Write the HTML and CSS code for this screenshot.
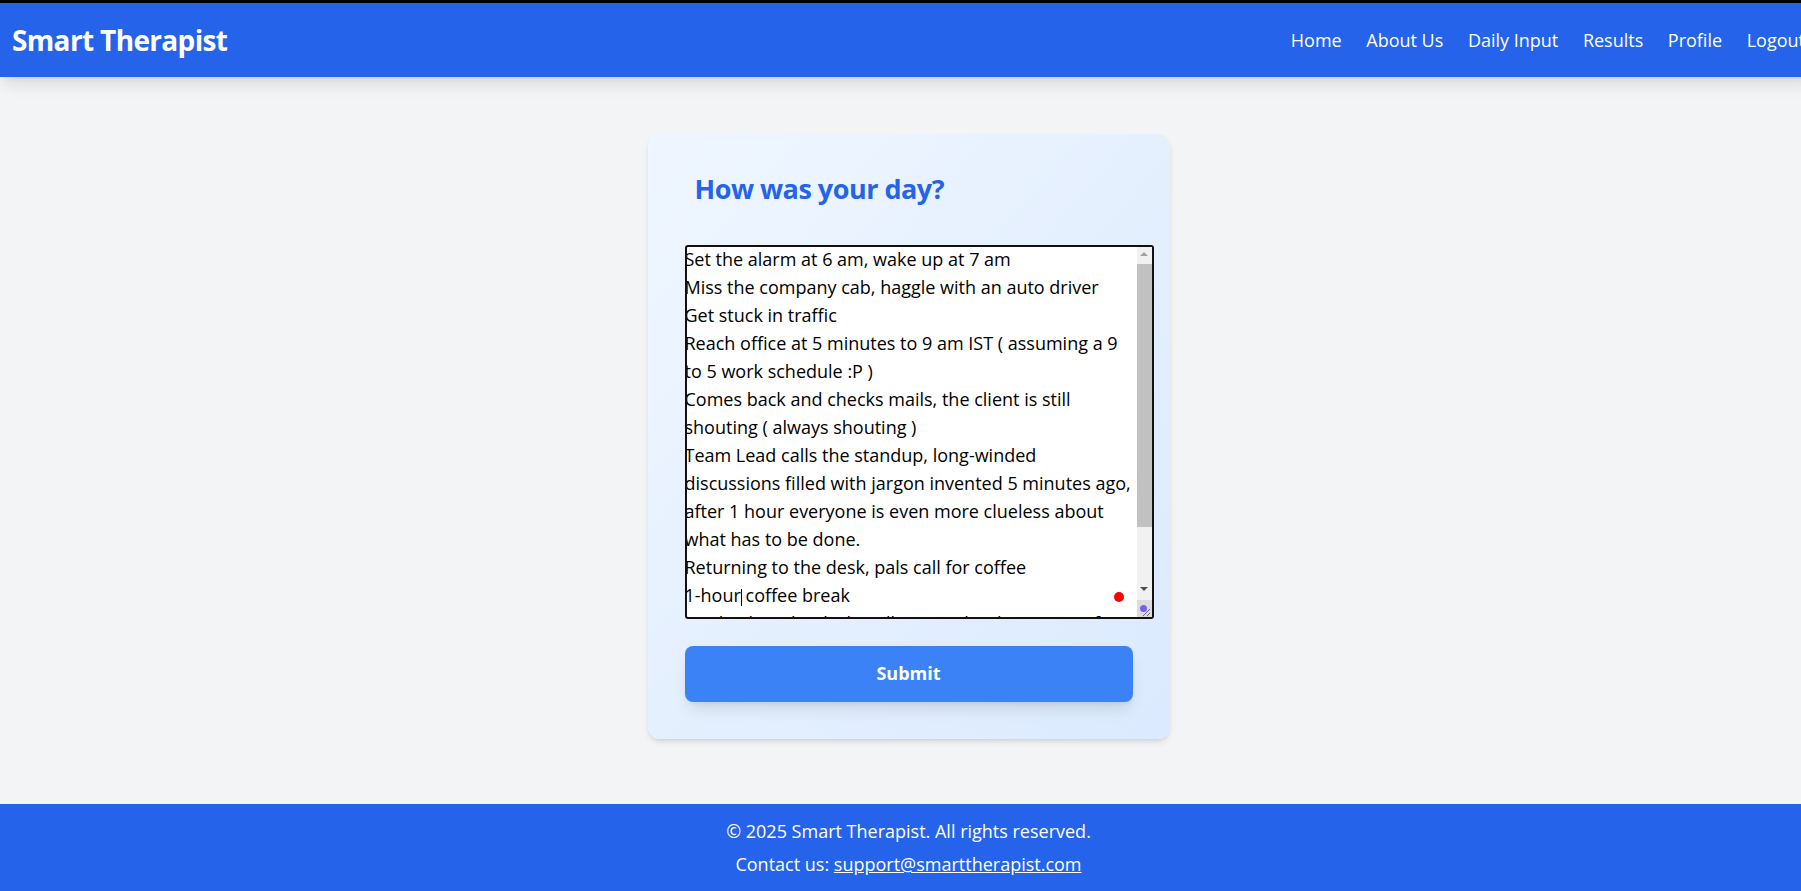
FILE: index.html
```html
<!DOCTYPE html>
<html lang="en">
<head>
<meta charset="utf-8">
<title>Smart Therapist - Daily Input</title>
<link rel="stylesheet" href="styles.css">
</head>
<body>
<div class="page">
  <header class="topbar">
    <a class="brand" href="#">Smart Therapist</a>
    <nav class="nav">
      <a href="#">Home</a>
      <a href="#">About Us</a>
      <a href="#">Daily Input</a>
      <a href="#">Results</a>
      <a href="#">Profile</a>
      <a href="#">Logout</a>
    </nav>
  </header>

  <main class="main">
    <section class="card">
      <h2 class="card-title">How was your day?</h2>
      <form class="entry-form" onsubmit="return false;">
        <div class="field">
          <textarea class="entry" name="entry" wrap="off">Set the alarm at 6 am, wake up at 7 am
Miss the company cab, haggle with an auto driver
Get stuck in traffic
Reach office at 5 minutes to 9 am IST ( assuming a 9
to 5 work schedule :P )
Comes back and checks mails, the client is still
shouting ( always shouting )
Team Lead calls the standup, long-winded
discussions filled with jargon invented 5 minutes ago,
after 1 hour everyone is even more clueless about
what has to be done.
Returning to the desk, pals call for coffee
1-hour coffee break
Get back to the desk, Still on Facebook, Twitter ( if
allowed )
Lunch break</textarea>
          <div class="scrollbar" aria-hidden="true">
            <span class="sb-btn sb-up"></span>
            <span class="sb-thumb"></span>
            <span class="sb-btn sb-down"></span>
          </div>
          <span class="resizer" aria-hidden="true">
            <svg width="15" height="17" viewBox="0 0 15 17">
              <path d="M13 9 L6 16 M13 13 L10 16" stroke="#6b6b6b" stroke-width="1" fill="none"/>
            </svg>
          </span>
          <span class="caret"></span>
          <span class="dot dot-red"></span>
          <span class="dot dot-purple"></span>
        </div>
        <button class="submit" type="submit">Submit</button>
      </form>
    </section>
  </main>

  <footer class="footer">
    <p>© 2025 Smart Therapist. All rights reserved.</p>
    <p>Contact us: <a href="#">support@smarttherapist.com</a></p>
  </footer>
</div>
</body>
</html>
```
FILE: styles.css
```css
html {
  overflow-x: hidden;
}

body {
  margin: 0;
  font-family: "Open Sans", "Noto Sans", sans-serif;
  background: #f3f4f6;
}

.page {
  min-width: 1817px;
  min-height: 891px;
  display: flex;
  flex-direction: column;
}

/* ---------- header ---------- */
.topbar {
  position: relative;
  z-index: 1;
  box-sizing: border-box;
  height: 77px;
  border-top: 3px solid #000;
  background: #2563eb;
  display: flex;
  align-items: center;
  justify-content: space-between;
  padding: 0 12px;
  box-shadow: 0 10px 15px -3px rgba(0, 0, 0, 0.1), 0 4px 6px -4px rgba(0, 0, 0, 0.1);
}

.brand {
  color: #fff;
  text-decoration: none;
  font-size: 28px;
  line-height: 36px;
  font-weight: 700;
  letter-spacing: -0.65px;
}

.nav {
  display: flex;
  gap: 24.6px;
}

.nav a {
  color: #fff;
  text-decoration: none;
  font-size: 18px;
  line-height: 28px;
}

/* ---------- main ---------- */
.main {
  flex: 1;
  display: flex;
  justify-content: center;
  align-items: flex-start;
  padding-top: 57px;
}

.card {
  box-sizing: border-box;
  width: 522px;
  padding: 37px;
  border-radius: 12px;
  background: linear-gradient(to bottom right, #eff6ff, #dbeafe);
  box-shadow: 0 4px 6px -1px rgba(0, 0, 0, 0.1), 0 2px 4px -2px rgba(0, 0, 0, 0.1);
}

.card-title {
  margin: 0 0 38px;
  padding-left: 10px;
  font-size: 27px;
  line-height: 36px;
  font-weight: 700;
  letter-spacing: -0.5px;
  color: #2563eb;
}

.entry-form {
  margin: 0;
}

.field {
  position: relative;
  width: 469px;
  height: 374px;
}

.entry {
  display: block;
  box-sizing: border-box;
  width: 469px;
  height: 374px;
  margin: 0;
  padding: 0 19px 0 0;
  border: 0;
  border-radius: 3px;
  outline: 2px solid #111;
  outline-offset: -2px;
  background: #fff;
  color: #000;
  font-family: "Open Sans", "Noto Sans", sans-serif;
  font-size: 18px;
  line-height: 28px;
  overflow: hidden;
  resize: none;
  white-space: pre;
}

/* drawn scrollbar and resize corner of the focused textarea */
.scrollbar {
  position: absolute;
  top: 2px;
  right: 2px;
  width: 15px;
  height: 353px;
  background: #f1f1f1;
}

.sb-btn {
  position: absolute;
  left: 0;
  width: 15px;
  height: 15px;
}

.sb-btn::before {
  content: "";
  position: absolute;
  left: 3.5px;
  width: 0;
  height: 0;
  border-left: 4px solid transparent;
  border-right: 4px solid transparent;
}

.sb-up {
  top: 0;
}

.sb-up::before {
  top: 5px;
  border-bottom: 4px solid #a3a3a3;
}

.sb-down {
  bottom: 0;
}

.sb-down::before {
  top: 2px;
  border-top: 4px solid #505050;
}

.sb-thumb {
  position: absolute;
  left: 0;
  top: 17px;
  width: 15px;
  height: 263px;
  background: #c1c1c1;
}

.resizer {
  position: absolute;
  right: 2px;
  bottom: 2px;
  width: 15px;
  height: 17px;
  background: #dcdcdc;
}

.resizer svg {
  display: block;
}

.caret {
  position: absolute;
  left: 56px;
  top: 344px;
  width: 1px;
  height: 17px;
  background: #000;
}

.dot {
  position: absolute;
  border-radius: 50%;
}

.dot-red {
  left: 429px;
  top: 347px;
  width: 10px;
  height: 10px;
  background: #f00;
}

.dot-purple {
  left: 455px;
  top: 360px;
  width: 7px;
  height: 7px;
  background: #7b5cf5;
}

.submit {
  display: block;
  width: 448px;
  height: 56px;
  margin: 27px auto 0;
  padding: 0 0 2px;
  border: 0;
  border-radius: 8px;
  background: #3b82f6;
  color: #fff;
  font-family: "Open Sans", "Noto Sans", sans-serif;
  font-size: 18px;
  font-weight: 700;
  box-shadow: 0 10px 15px -3px rgba(0, 0, 0, 0.1), 0 4px 6px -4px rgba(0, 0, 0, 0.1);
  cursor: pointer;
}

/* ---------- footer ---------- */
.footer {
  background: #2563eb;
  color: #fff;
  text-align: center;
  padding: 13px 0;
}

.footer p {
  margin: 0;
  font-size: 18px;
  line-height: 28px;
}

.footer p + p {
  margin-top: 5px;
}

.footer a {
  color: #fff;
  text-decoration: underline;
}
```
